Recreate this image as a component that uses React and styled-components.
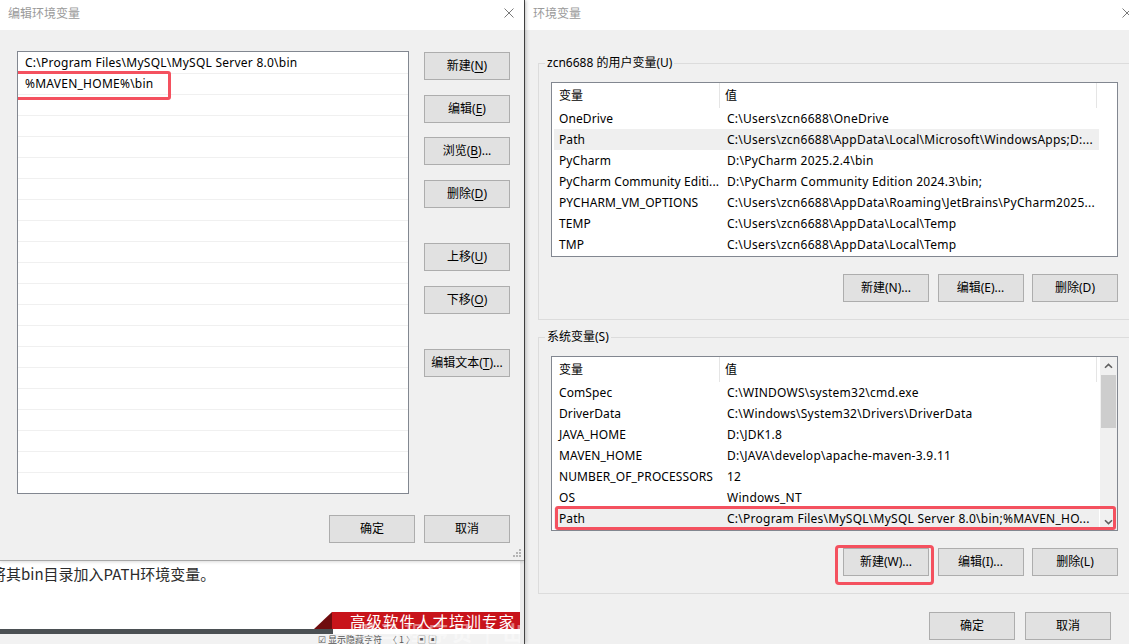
import React from 'react';
import styled, { createGlobalStyle } from 'styled-components';

const GlobalStyle = createGlobalStyle`
  html, body {
    margin: 0;
    padding: 0;
  }
  body {
    width: 1129px;
    height: 644px;
    overflow: hidden;
    background: #fff;
    color: #000;
    font-family: "Noto Sans", "Noto Sans CJK SC", sans-serif;
    font-size: 12px;
  }
`;

const pathEntries = ['C:\\Program Files\\MySQL\\MySQL Server 8.0\\bin', '%MAVEN_HOME%\\bin'];

const userVars = [
  ['OneDrive', 'C:\\Users\\zcn6688\\OneDrive'],
  ['Path', 'C:\\Users\\zcn6688\\AppData\\Local\\Microsoft\\WindowsApps;D:...', true],
  ['PyCharm', 'D:\\PyCharm 2025.2.4\\bin'],
  ['PyCharm Community Editi...', 'D:\\PyCharm Community Edition 2024.3\\bin;'],
  ['PYCHARM_VM_OPTIONS', 'C:\\Users\\zcn6688\\AppData\\Roaming\\JetBrains\\PyCharm2025...'],
  ['TEMP', 'C:\\Users\\zcn6688\\AppData\\Local\\Temp'],
  ['TMP', 'C:\\Users\\zcn6688\\AppData\\Local\\Temp'],
];

const systemVars = [
  ['ComSpec', 'C:\\WINDOWS\\system32\\cmd.exe'],
  ['DriverData', 'C:\\Windows\\System32\\Drivers\\DriverData'],
  ['JAVA_HOME', 'D:\\JDK1.8'],
  ['MAVEN_HOME', 'D:\\JAVA\\develop\\apache-maven-3.9.11'],
  ['NUMBER_OF_PROCESSORS', '12'],
  ['OS', 'Windows_NT'],
  ['Path', 'C:\\Program Files\\MySQL\\MySQL Server 8.0\\bin;%MAVEN_HO...', true],
];

const CloseIcon = () => (
  <svg width='10' height='10' viewBox='0 0 10 10'>
    <path d='M0.5 0.5 L9.5 9.5 M9.5 0.5 L0.5 9.5' stroke='#7a7a7a' strokeWidth='1' fill='none' />
  </svg>
);

const Chevron = ({ down }) => (
  <svg width='9' height='6' viewBox='0 0 9 6'>
    <path
      d={down ? 'M1 1.2 L4.5 4.6 L8 1.2' : 'M1 4.8 L4.5 1.4 L8 4.8'}
      stroke='#606060'
      strokeWidth='1.6'
      fill='none'
    />
  </svg>
);

const Grip = () => (
  <svg width='9' height='9' viewBox='0 0 9 9'>
    <g fill='#b5b5b5'>
      <rect x='7' y='1' width='2' height='2' />
      <rect x='4' y='4' width='2' height='2' />
      <rect x='7' y='4' width='2' height='2' />
      <rect x='1' y='7' width='2' height='2' />
      <rect x='4' y='7' width='2' height='2' />
      <rect x='7' y='7' width='2' height='2' />
    </g>
  </svg>
);

const Mn = ({ children }) => <u>{children}</u>;

const DataList = ({ rows, scroll, marked }) => (
  <ListView>
    <ListBody>
      <HeaderRow>
        <HeaderCell>变量</HeaderCell>
        <HeaderCell>值</HeaderCell>
        <HeaderCell />
      </HeaderRow>
      {rows.map(([name, value, selected]) => (
        <DataRow key={name} selected={selected}>
          <NameCell>{name}</NameCell>
          <ValueCell>{value}</ValueCell>
        </DataRow>
      ))}
    </ListBody>
    {scroll && (
      <ScrollBar>
        <ScrollArrow>
          <Chevron />
        </ScrollArrow>
        <ScrollTrack>
          <ScrollThumb />
        </ScrollTrack>
        <ScrollArrow>
          <Chevron down />
        </ScrollArrow>
      </ScrollBar>
    )}
    {marked && <RowMark />}
  </ListView>
);

const App = () => {
  const emptyRows = Array.from({ length: 19 });

  return (
    <>
      <GlobalStyle />
      <Screen>
        <LeftColumn>
          <EditDialog>
            <TitleBar>
              <Title>编辑环境变量</Title>
              <CloseBox right={10}>
                <CloseIcon />
              </CloseBox>
            </TitleBar>
            <EditBody>
              <EditMain>
                <PathList>
                  {pathEntries.map((entry, i) => (
                    <PathRow key={entry}>
                      {entry}
                      {i === 1 && <EntryMark />}
                    </PathRow>
                  ))}
                  {emptyRows.map((_, i) => (
                    <PathRow key={i} />
                  ))}
                </PathList>
                <ButtonColumn>
                  <Button>新建(<Mn>N</Mn>)</Button>
                  <Button>编辑(<Mn>E</Mn>)</Button>
                  <Button>浏览(<Mn>B</Mn>)...</Button>
                  <Button>删除(<Mn>D</Mn>)</Button>
                  <Button spaced>上移(<Mn>U</Mn>)</Button>
                  <Button>下移(<Mn>O</Mn>)</Button>
                  <Button spaced>编辑文本(<Mn>T</Mn>)...</Button>
                </ButtonColumn>
              </EditMain>
              <EditFooter>
                <Button>确定</Button>
                <Button>取消</Button>
              </EditFooter>
              <GripBox>
                <Grip />
              </GripBox>
            </EditBody>
          </EditDialog>

          <BehindPage>
            <ArticleText>将其bin目录加入PATH环境变量。</ArticleText>
            <Band>
              <BannerRow>
                <BannerFold />
                <Banner>高级软件人才培训专家</Banner>
              </BannerRow>
              <DarkBar />
              <StatusStrip>☑ 显示隐藏字符 &nbsp; 〈 1 〉 ▣ ▣</StatusStrip>
              <Watermark>黑马程序员 | 出</Watermark>
            </Band>
          </BehindPage>
        </LeftColumn>

        <EnvDialog>
          <TitleBar>
            <Title>环境变量</Title>
            <CloseBox right={13}>
              <CloseIcon />
            </CloseBox>
          </TitleBar>
          <EnvBody>
            <Group>
              <Legend>zcn6688 的用户变量(U)</Legend>
              <DataList rows={userVars} />
              <GroupButtons>
                <Button>新建(N)...</Button>
                <Button>编辑(E)...</Button>
                <Button>删除(D)</Button>
              </GroupButtons>
            </Group>

            <Group spaced>
              <Legend>系统变量(S)</Legend>
              <DataList rows={systemVars} scroll marked />
              <GroupButtons>
                <MarkedButton>
                  <Button>新建(W)...</Button>
                  <ButtonMark />
                </MarkedButton>
                <Button>编辑(I)...</Button>
                <Button>删除(L)</Button>
              </GroupButtons>
            </Group>

            <EnvFooter>
              <Button>确定</Button>
              <Button>取消</Button>
            </EnvFooter>
          </EnvBody>
        </EnvDialog>
      </Screen>
    </>
  );
};

export default App;

const Screen = styled.div`
  display: flex;
  width: 1129px;
  height: 644px;
  overflow: hidden;
`;

const LeftColumn = styled.div`
  position: relative;
  z-index: 1;
  flex: none;
  display: flex;
  flex-direction: column;
  width: 524px;
  box-shadow: 2px 0 4px rgba(0, 0, 0, 0.22);
`;

const EditDialog = styled.div`
  position: relative;
  z-index: 1;
  display: flex;
  flex-direction: column;
  height: 561px;
  box-sizing: border-box;
  background: #f0f0f0;
  border-bottom: 1px solid #a8a8a8;
  box-shadow: 0 1px 3px rgba(0, 0, 0, 0.15);
`;

const TitleBar = styled.div`
  flex: none;
  display: flex;
  align-items: center;
  justify-content: space-between;
  height: 30px;
  padding-left: 8px;
  background: #fff;
`;

const Title = styled.div`
  color: #9a9a9a;
  font-size: 12px;
  line-height: 16px;
  margin-top: -2px;
`;

const CloseBox = styled.div`
  display: flex;
  margin-right: ${(p) => p.right}px;
  margin-top: -4px;
`;

const EditBody = styled.div`
  position: relative;
  flex: 1;
  display: flex;
  flex-direction: column;
  padding: 21px 14px 0 17px;
`;

const EditMain = styled.div`
  display: flex;
  gap: 15px;
`;

const PathList = styled.div`
  width: 392px;
  height: 443px;
  box-sizing: border-box;
  border: 1px solid #828790;
  background: #fff;
  overflow: hidden;
`;

const PathRow = styled.div`
  position: relative;
  height: 20px;
  padding: 1px 0 0 7px;
  box-sizing: content-box;
  line-height: 20px;
  margin-bottom: -1px;
  border-bottom: 1px solid #f0f0f0;
  letter-spacing: 0.25px;
  white-space: nowrap;
`;

const EntryMark = styled.div`
  position: absolute;
  left: -5px;
  top: -2px;
  width: 158px;
  height: 29px;
  box-sizing: border-box;
  border: 3px solid #f4515f;
  border-radius: 3px;
`;

const ButtonColumn = styled.div`
  display: flex;
  flex-direction: column;
  gap: 14.5px;
  width: 86px;
  padding-top: 1px;
`;

const Button = styled.button`
  flex: none;
  width: 86px;
  height: 28px;
  box-sizing: border-box;
  margin: ${(p) => (p.spaced ? '21px 0 0' : '0')};
  padding: 0;
  border: 1px solid #adadad;
  background: #e1e1e1;
  color: #000;
  font-family: inherit;
  font-size: 12px;
  line-height: 16px;
  white-space: nowrap;

  u {
    text-underline-offset: 2px;
  }
`;

const EditFooter = styled.div`
  display: flex;
  justify-content: flex-end;
  gap: 9px;
  margin-top: 21px;
`;

const GripBox = styled.div`
  position: absolute;
  right: 3px;
  bottom: 3px;
  display: flex;
`;

const BehindPage = styled.div`
  flex: 1;
  display: flex;
  flex-direction: column;
  justify-content: space-between;
  background: #fff;
  overflow: hidden;
  border-right: 4px solid #ececec;
`;

const ArticleText = styled.div`
  margin: 3px 0 0 -9px;
  color: #2b2b2b;
  font-family: "Noto Sans CJK SC", sans-serif;
  font-size: 15px;
  line-height: 20px;
  white-space: nowrap;
`;

const Band = styled.div`
  position: relative;
  display: flex;
  flex-direction: column;
`;

const BannerRow = styled.div`
  display: flex;
  justify-content: flex-end;
  height: 17px;
`;

const BannerFold = styled.div`
  width: 0;
  height: 0;
  border-bottom: 17px solid #6f0c0e;
  border-left: 18px solid transparent;
`;

const Banner = styled.div`
  width: 188px;
  padding-left: 18px;
  box-sizing: border-box;
  background: #c8141b;
  color: #fff;
  font-family: "Noto Sans CJK SC", sans-serif;
  font-size: 15.5px;
  letter-spacing: 1px;
  line-height: 19px;
  white-space: nowrap;
  overflow: hidden;
`;

const DarkBar = styled.div`
  width: 333px;
  height: 5px;
  background: #4b5053;
`;

const StatusStrip = styled.div`
  height: 10px;
  padding-left: 318px;
  background: #f2f2f2;
  color: #555;
  font-family: "Noto Sans CJK SC", sans-serif;
  font-size: 9px;
  line-height: 12px;
  white-space: nowrap;
  overflow: hidden;
`;

const Watermark = styled.div`
  position: absolute;
  left: 356px;
  top: 6px;
  color: rgba(255, 255, 255, 0.45);
  font-family: "Noto Sans CJK SC", sans-serif;
  font-size: 20px;
  font-weight: 700;
  letter-spacing: 4px;
  white-space: nowrap;
`;

const EnvDialog = styled.div`
  flex: none;
  display: flex;
  flex-direction: column;
  width: 620px;
  height: 644px;
  border-left: 1px solid #505050;
  background: #f0f0f0;
`;

const EnvBody = styled.div`
  display: flex;
  flex-direction: column;
  padding: 25px 15px 0 13px;
`;

const Group = styled.fieldset`
  margin: ${(p) => (p.spaced ? '9px' : '0')} 0 0;
  padding: 11px 11px 17px 12px;
  min-width: 0;
  border: 1px solid #dcdcdc;
`;

const Legend = styled.legend`
  margin-left: -6px;
  padding: 0 2px;
  font-size: 12px;
  line-height: 16px;
`;

const ListView = styled.div`
  position: relative;
  display: flex;
  height: 175px;
  box-sizing: border-box;
  border: 1px solid #828790;
  background: #fff;
`;

const ListBody = styled.div`
  flex: 1;
  min-width: 0;
  overflow: hidden;
`;

const HeaderRow = styled.div`
  display: grid;
  grid-template-columns: 168px 377px 1fr;
  height: 25px;
`;

const HeaderCell = styled.div`
  padding-left: 7px;
  border-right: 1px solid #e5e5e5;
  line-height: 25px;

  & + & {
    padding-left: 5px;
  }

  &:last-child {
    border-right: none;
  }
`;

const DataRow = styled.div`
  display: grid;
  grid-template-columns: 166px 379px;
  width: 545px;
  height: 21px;
  margin-left: 2px;
  background: ${(p) => (p.selected ? '#efefef' : 'transparent')};
  line-height: 21px;
  letter-spacing: 0.25px;
`;

const NameCell = styled.div`
  padding-left: 5px;
  white-space: nowrap;
  letter-spacing: 0.1px;
`;

const ValueCell = styled.div`
  padding-left: 7px;
  white-space: nowrap;
  overflow: hidden;
`;

const ScrollBar = styled.div`
  flex: none;
  display: flex;
  flex-direction: column;
  width: 17px;
  background: #f0f0f0;
`;

const ScrollArrow = styled.div`
  display: flex;
  align-items: center;
  justify-content: center;
  height: 17px;
`;

const ScrollTrack = styled.div`
  flex: 1;
  padding: 1px 1px 0;
`;

const ScrollThumb = styled.div`
  height: 53px;
  background: #cdcdcd;
`;

const RowMark = styled.div`
  position: absolute;
  left: 3px;
  top: 149px;
  width: 561px;
  height: 24px;
  box-sizing: border-box;
  border: 3px solid #f4515f;
  border-radius: 3px;
`;

const GroupButtons = styled.div`
  display: flex;
  justify-content: flex-end;
  gap: 8.5px;
  margin-top: 17px;
`;

const MarkedButton = styled.div`
  position: relative;
  display: flex;
`;

const ButtonMark = styled.div`
  position: absolute;
  left: -8px;
  top: -3px;
  width: 99px;
  height: 40px;
  box-sizing: border-box;
  border: 3px solid #f4515f;
  border-radius: 4px;
`;

const EnvFooter = styled.div`
  display: flex;
  justify-content: flex-end;
  gap: 10px;
  margin-top: 18px;
  padding-right: 19px;
`;
